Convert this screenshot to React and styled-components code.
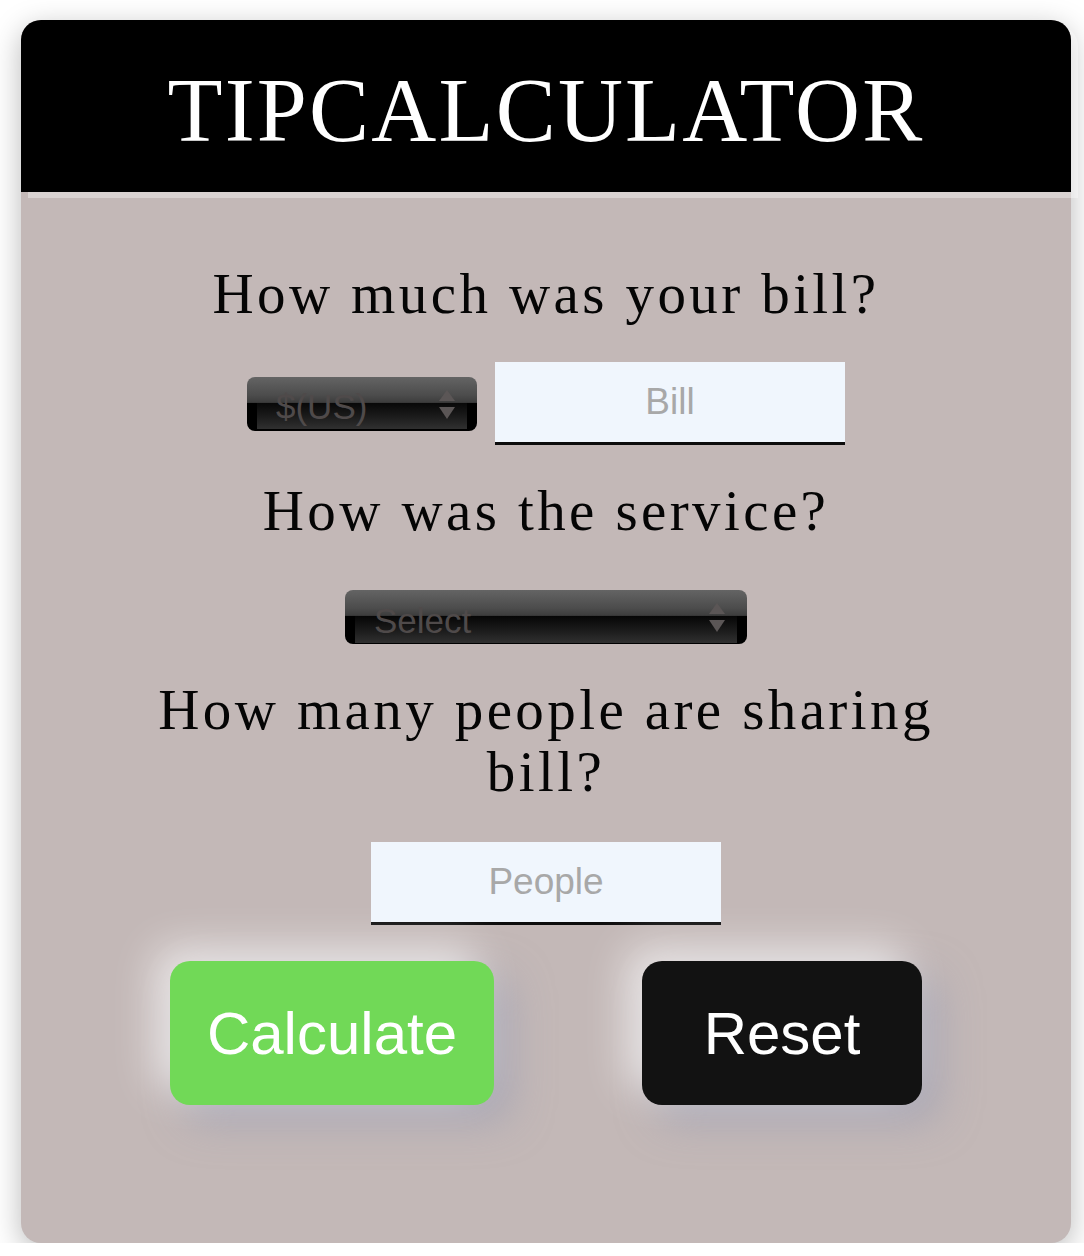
import React from "react";
import styled, { createGlobalStyle } from "styled-components";

const GlobalStyle = createGlobalStyle`
  html, body { margin: 0; padding: 0; background: #ffffff; }
  body { font-family: "Liberation Serif", "Times New Roman", serif; }
  * { box-sizing: border-box; }
`;

const Card = styled.div`
  margin: 20px 0 0 21px;
  width: 1050px;
  background: #c3b8b7;
  border-radius: 20px;
  box-shadow: 0 8px 30px rgba(0, 0, 0, 0.28);
`;

const Header = styled.header`
  height: 172px;
  padding-top: 46px;
  background: #000;
  border-radius: 20px 20px 0 0;
  box-shadow: 7px 6px 0 rgba(255, 255, 255, 0.37);
`;

const Title = styled.h1`
  margin: 0;
  color: #fff;
  font-family: "Liberation Serif", "Times New Roman", serif;
  font-weight: 400;
  font-size: 90px;
  line-height: 90px;
  letter-spacing: 2.2px;
  text-align: center;
`;

const Main = styled.main`
  display: flex;
  flex-direction: column;
  align-items: center;
  padding: 71px 0 138px;
`;

const Question = styled.p`
  margin: ${(p) => p.$mt || 0}px 0 0;
  max-width: 830px;
  color: #050505;
  font-family: "Liberation Serif", "Times New Roman", serif;
  font-size: 57px;
  line-height: 62px;
  letter-spacing: 3.4px;
  text-align: center;
`;

const Row = styled.div`
  display: flex;
  align-items: center;
  gap: 18px;
  margin-top: ${(p) => p.$mt || 0}px;
`;

const SelectWrap = styled.div`
  position: relative;
  width: ${(p) => p.$w}px;
  height: 54px;
  margin-top: ${(p) => p.$mt || 0}px;
`;

const Select = styled.select`
  appearance: none;
  -webkit-appearance: none;
  display: block;
  width: 100%;
  height: 100%;
  margin: 0;
  padding: 6px 50px 0 29px;
  border: none;
  border-radius: 8px;
  outline: none;
  color: #4f4a4a;
  font-family: "Liberation Sans", Arial, sans-serif;
  font-size: 35px;
  background:
    linear-gradient(to bottom, #646464 0%, #4c4c4c 70%, #3c3c3c 100%) top / 100% 48% no-repeat,
    linear-gradient(to bottom, #060606 0%, #1c1c1c 55%, #303030 100%) center calc(100% - 1px) / calc(100% - 20px) calc(52% - 1px) no-repeat,
    #000;
`;

const Arrows = styled.svg`
  position: absolute;
  right: 22px;
  top: 13px;
  pointer-events: none;
`;

const Field = styled.input`
  display: block;
  width: 350px;
  height: 83px;
  margin: ${(p) => p.$mt || 0}px 0 0;
  padding: 0 10px;
  border: none;
  border-bottom: 3px solid #0c0c0c;
  border-radius: 0;
  outline: none;
  background: #f0f6fd;
  color: #222;
  font-family: "Liberation Sans", Arial, sans-serif;
  font-size: 37px;
  text-align: center;
  -moz-appearance: textfield;
  &::placeholder { color: #a8a8a8; }
  &::-webkit-inner-spin-button,
  &::-webkit-outer-spin-button {
    -webkit-appearance: none;
    margin: 0;
  }
`;

const ButtonRow = styled.div`
  display: flex;
  gap: 148px;
  margin-top: 36px;
`;

const Button = styled.button`
  width: ${(p) => p.$w}px;
  height: 144px;
  border: none;
  border-radius: 20px;
  background: ${(p) => (p.$variant === "go" ? "#71d957" : "#121212")};
  color: #fff;
  font-family: "Liberation Sans", Arial, sans-serif;
  font-size: 60px;
  cursor: pointer;
  box-shadow:
    -16px -14px 42px rgba(255, 255, 255, 0.65),
    16px 16px 40px rgba(150, 155, 178, 0.6);
`;

function SelectArrows() {
  return (
    <Arrows width="16" height="30" viewBox="0 0 16 30">
      <polygon points="8,0 16,11 0,11" fill="#5b5656" />
      <polygon points="0,17 16,17 8,29" fill="#5b5656" />
    </Arrows>
  );
}

export default function App() {
  return (
    <>
      <GlobalStyle />
      <Card>
        <Header>
          <Title>TIPCALCULATOR</Title>
        </Header>
        <Main>
          <Question>How much was your bill?</Question>
          <Row $mt={37}>
            <SelectWrap $w={230}>
              <Select defaultValue="usd">
                <option value="usd">$(US)</option>
                <option value="eur">€(EUR)</option>
                <option value="gbp">£(GBP)</option>
              </Select>
              <SelectArrows />
            </SelectWrap>
            <Field type="number" placeholder="Bill" />
          </Row>
          <Question $mt={35}>How was the service?</Question>
          <SelectWrap $w={402} $mt={48}>
            <Select defaultValue="">
              <option value="" disabled>
                Select
              </option>
              <option value="30">30% - Outstanding</option>
              <option value="20">20% - Good</option>
              <option value="15">15% - It was OK</option>
              <option value="10">10% - Bad</option>
            </Select>
            <SelectArrows />
          </SelectWrap>
          <Question $mt={35}>How many people are sharing bill?</Question>
          <Field type="number" placeholder="People" $mt={39} />
          <ButtonRow>
            <Button $variant="go" $w={324}>Calculate</Button>
            <Button $w={280}>Reset</Button>
          </ButtonRow>
        </Main>
      </Card>
    </>
  );
}
